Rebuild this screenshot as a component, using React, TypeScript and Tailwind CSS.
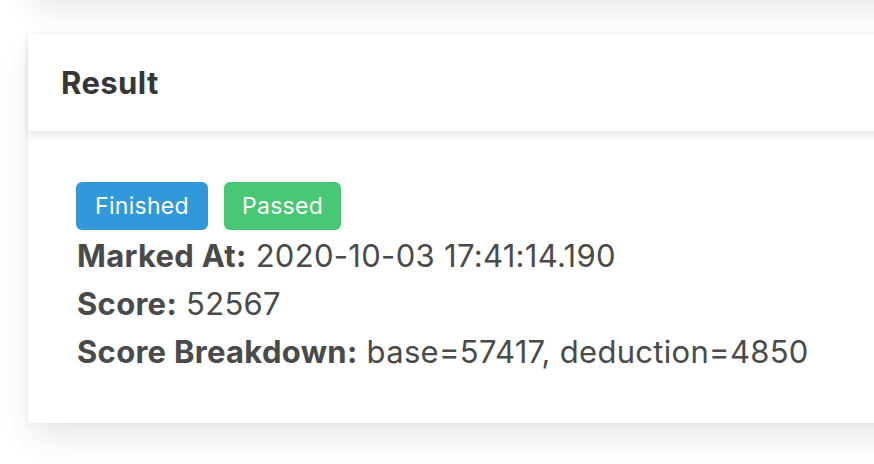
export default function App() {
    return (
        <div
            className="w-[874px] h-[464px] overflow-hidden bg-white text-[#4a4a4a]"
            style={{ fontFamily: "Inter, 'Noto Sans', sans-serif" }}
        >
            {/* card above, just out of view */}
            <div className="ml-[28px] w-[900px] h-[60px] -mt-[64px] bg-white shadow-[0_16px_32px_-4px_rgba(10,10,10,0.1),0_0_0_2px_rgba(10,10,10,0.02)]" />

            {/* Result card */}
            <div className="mt-[38px] ml-[28px] w-[900px] bg-white shadow-[0_16px_32px_-4px_rgba(10,10,10,0.1),0_0_0_2px_rgba(10,10,10,0.02)]">
                <header className="relative px-[33px] py-[24px] shadow-[0_4px_8px_rgba(10,10,10,0.1)]">
                    <p className="text-[31px] leading-[49px] tracking-[0.4px] font-bold text-[#363636]">Result</p>
                </header>

                <div className="px-[48px] pt-[51px] pb-[47px] text-[31px] leading-[48px] tracking-[0.3px]">
                    <div className="flex gap-[16px] mb-[2px]">
                        <span className="h-[48px] px-[19px] flex items-center rounded-[6px] bg-[#3298dc] text-white text-[23px]">
                            Finished
                        </span>
                        <span className="h-[48px] px-[18px] flex items-center rounded-[6px] bg-[#48c774] text-white text-[23px]">
                            Passed
                        </span>
                    </div>
                    <div className="pl-[1px]">
                        <strong className="font-bold text-[#4a4a4a]">Marked At:</strong> 2020-10-03 17:41:14.190
                    </div>
                    <div className="pl-[1px]">
                        <strong className="font-bold text-[#4a4a4a]">Score:</strong> 52567
                    </div>
                    <div className="pl-[1px]">
                        <strong className="font-bold text-[#4a4a4a]">Score Breakdown:</strong> base=57417, deduction=4850
                    </div>
                </div>
            </div>
        </div>
    );
}
